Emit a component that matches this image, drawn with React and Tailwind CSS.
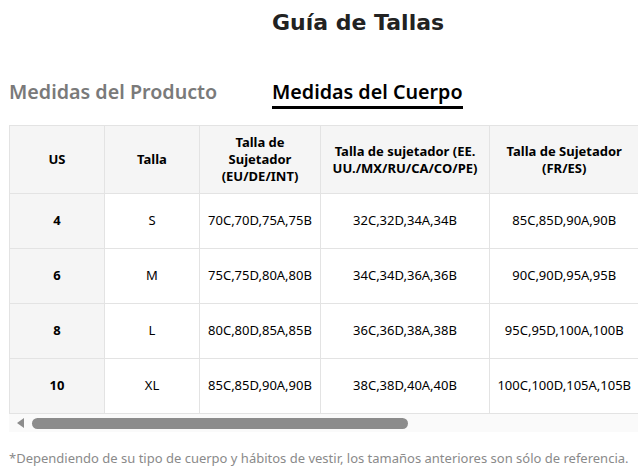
import React, { useState } from "react";

const rows = [
  { us: "4", talla: "S", eu: "70C,70D,75A,75B", usa: "32C,32D,34A,34B", fr: "85C,85D,90A,90B" },
  { us: "6", talla: "M", eu: "75C,75D,80A,80B", usa: "34C,34D,36A,36B", fr: "90C,90D,95A,95B" },
  { us: "8", talla: "L", eu: "80C,80D,85A,85B", usa: "36C,36D,38A,38B", fr: "95C,95D,100A,100B" },
  { us: "10", talla: "XL", eu: "85C,85D,90A,90B", usa: "38C,38D,40A,40B", fr: "100C,100D,105A,105B" },
];

const SizeGuide = () => {
  const [tab, setTab] = useState("cuerpo");

  return (
    <div className="w-[638px] h-[473px] bg-white overflow-hidden font-['Noto_Sans',sans-serif] text-black">
      {/* Title */}
      <h1 className="pl-[272px] pt-[8px] text-[22px] leading-[30px] font-bold text-[#222] font-['DejaVu_Sans',sans-serif]">
        Guía de Tallas
      </h1>

      {/* Tabs */}
      <div className="flex pl-[9px] mt-[34px] h-[44px]">
        <button
          onClick={() => setTab("producto")}
          className={`w-[263px] text-left text-[19.7px] leading-[26px] font-semibold ${
            tab === "producto" ? "text-black" : "text-[#7a7a7a]"
          }`}
        >
          <span
            className={`inline-block pb-[1px] border-b-[3px] ${
              tab === "producto" ? "border-black" : "border-transparent"
            }`}
          >
            Medidas del Producto
          </span>
        </button>
        <button
          onClick={() => setTab("cuerpo")}
          className={`text-left text-[19.7px] leading-[26px] font-semibold ${
            tab === "cuerpo" ? "text-black" : "text-[#7a7a7a]"
          }`}
        >
          <span
            className={`inline-block pb-[1px] border-b-[3px] ${
              tab === "cuerpo" ? "border-black" : "border-transparent"
            }`}
          >
            Medidas del Cuerpo
          </span>
        </button>
      </div>

      {/* Table */}
      <div className="ml-[9px] mt-[9px] w-[629px] overflow-hidden">
        <table className="table-fixed border-collapse w-[660px] text-[13px] text-center">
          <colgroup>
            <col className="w-[95px]" />
            <col className="w-[95px]" />
            <col className="w-[121px]" />
            <col className="w-[169px]" />
            <col className="w-[180px]" />
          </colgroup>
          <thead>
            <tr className="h-[68px] bg-[#f5f5f5] font-bold">
              <th className="border border-[#e3e3e3] px-2 leading-[17px]">US</th>
              <th className="border border-[#e3e3e3] px-2 leading-[17px]">Talla</th>
              <th className="border border-[#e3e3e3] px-2 leading-[17px]">
                Talla de
                <br />
                Sujetador
                <br />
                (EU/DE/INT)
              </th>
              <th className="border border-[#e3e3e3] px-2 leading-[17px]">
                Talla de sujetador (EE.
                <br />
                UU./MX/RU/CA/CO/PE)
              </th>
              <th className="border border-[#e3e3e3] border-r-0 pl-[0px] pr-[31px] leading-[17px]">
                Talla de Sujetador
                <br />
                (FR/ES)
              </th>
            </tr>
          </thead>
          <tbody>
            {rows.map((r) => (
              <tr key={r.us} className="h-[55px]">
                <td className="border border-[#e3e3e3] bg-[#f5f5f5] font-bold">{r.us}</td>
                <td className="border border-[#e3e3e3]">{r.talla}</td>
                <td className="border border-[#e3e3e3] whitespace-nowrap">{r.eu}</td>
                <td className="border border-[#e3e3e3] whitespace-nowrap">{r.usa}</td>
                <td className="border border-[#e3e3e3] border-r-0 whitespace-nowrap pr-[31px]">{r.fr}</td>
              </tr>
            ))}
          </tbody>
        </table>

        {/* Fake horizontal scrollbar */}
        <div className="h-[18px] bg-[#fafafa] flex items-center">
          <svg width="23" height="18" viewBox="0 0 23 18" className="shrink-0">
            <path d="M15 4 L15 14 L8 9 Z" fill="#8c8c8c" />
          </svg>
          <div className="h-[11px] w-[376px] rounded-full bg-[#8c8c8c]" />
        </div>
      </div>

      {/* Footnote */}
      <p className="pl-[9px] mt-[17px] text-[13px] leading-[18px] text-[#8a8a8a]">
        *Dependiendo de su tipo de cuerpo y hábitos de vestir, los tamaños anteriores son sólo de referencia.
      </p>
    </div>
  );
};

export default SizeGuide;
